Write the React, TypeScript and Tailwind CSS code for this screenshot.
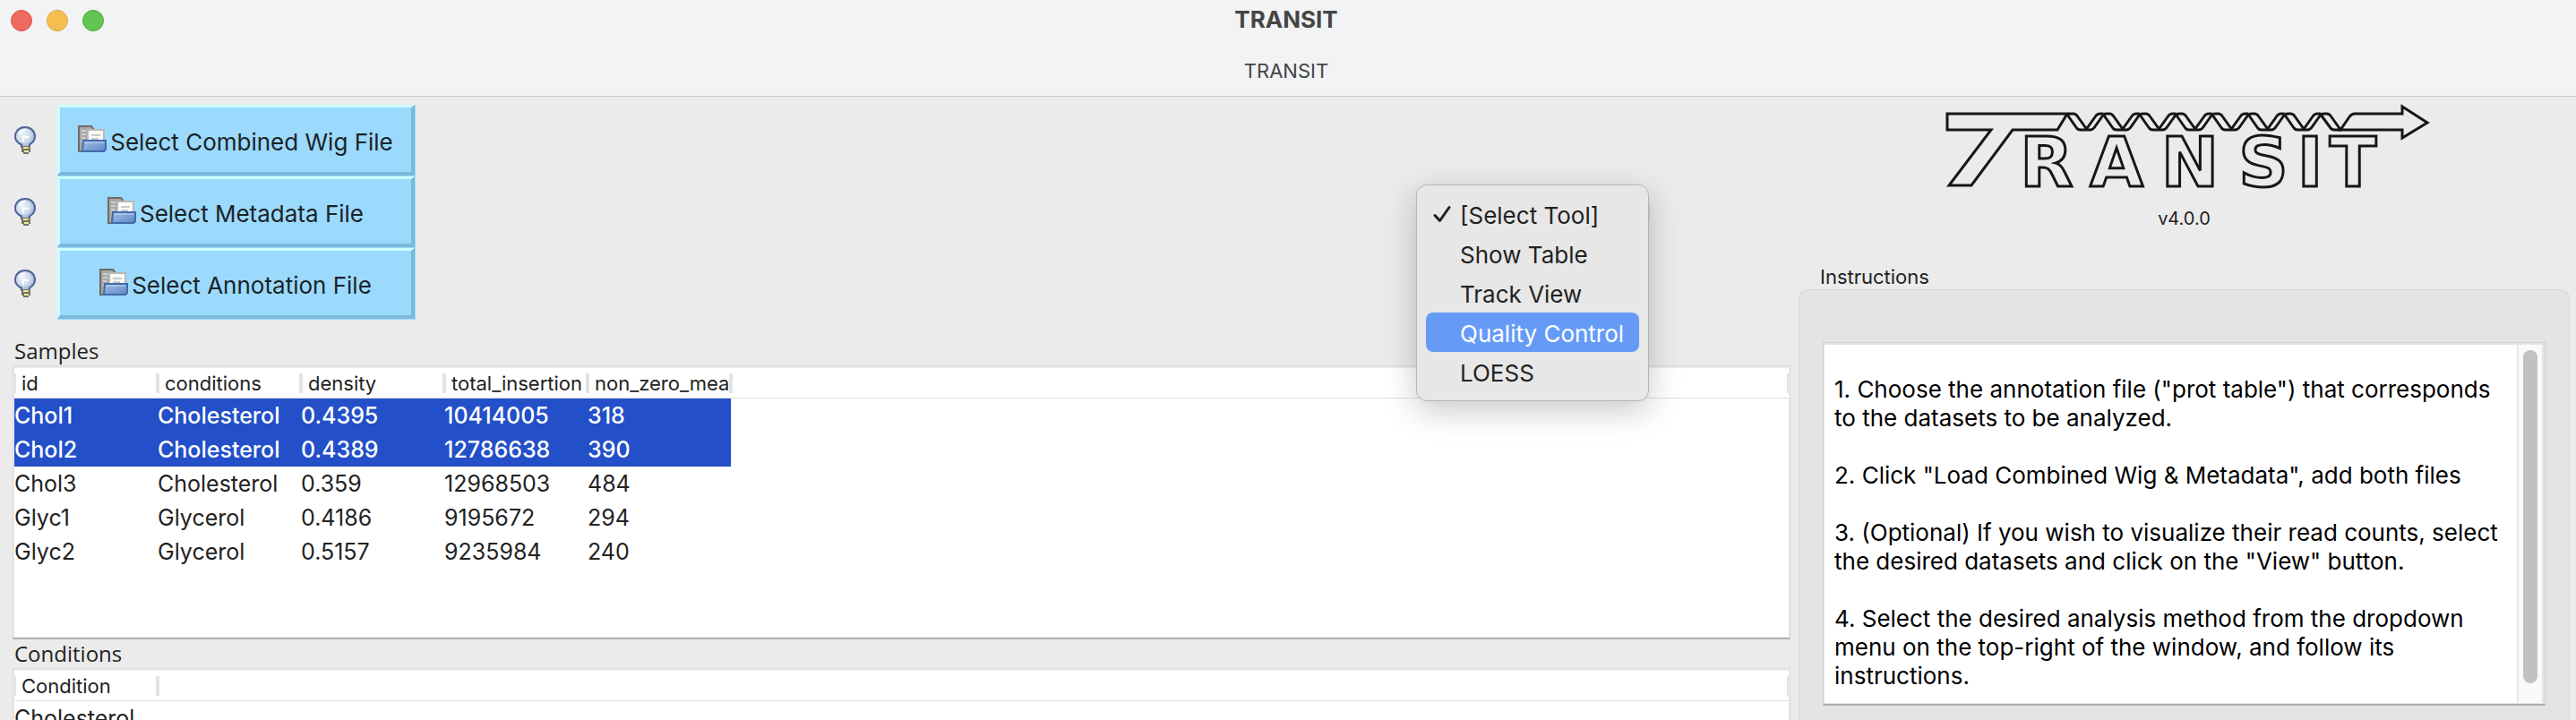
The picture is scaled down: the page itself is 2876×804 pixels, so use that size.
import React from "react";

const SAMPLE_COLUMNS = ["id", "conditions", "density", "total_insertion", "non_zero_mea"];

const SAMPLES = [
  { cells: ["Chol1", "Cholesterol", "0.4395", "10414005", "318"], selected: true },
  { cells: ["Chol2", "Cholesterol", "0.4389", "12786638", "390"], selected: true },
  { cells: ["Chol3", "Cholesterol", "0.359", "12968503", "484"], selected: false },
  { cells: ["Glyc1", "Glycerol", "0.4186", "9195672", "294"], selected: false },
  { cells: ["Glyc2", "Glycerol", "0.5157", "9235984", "240"], selected: false },
];

const CONDITIONS = [{ cells: ["Cholesterol"], selected: false }];

const FILES = ["Select Combined Wig File", "Select Metadata File", "Select Annotation File"];

const TOOLS = ["[Select Tool]", "Show Table", "Track View", "Quality Control", "LOESS"];

const STEPS = [
  '1. Choose the annotation file ("prot table") that corresponds to the datasets to be analyzed.',
  '2. Click "Load Combined Wig & Metadata", add both files',
  '3. (Optional) If you wish to visualize their read counts, select the desired datasets and click on the "View" button.',
  "4. Select the desired analysis method from the dropdown menu on the top-right of the window, and follow its instructions.",
];

function BulbIcon() {
  return (
    <svg viewBox="0 0 24 32" className="h-8 w-6" aria-hidden="true">
      <defs>
        <radialGradient id="glass" cx="0.4" cy="0.4" r="0.65">
          <stop offset="0" stopColor="#eef4fb" />
          <stop offset="0.55" stopColor="#cfdcec" />
          <stop offset="1" stopColor="#92a8cd" />
        </radialGradient>
      </defs>
      <path
        d="M8 23v-2.500C3.500 18.500 1 15.500 1 11.500 1 5.500 5.500 1 12 1s11 4.500 11 10.500c0 4-2.500 7-6 9V23z"
        fill="url(#glass)"
        stroke="#4f6298"
        strokeWidth="2"
      />
      <path d="M9 17v-6h7v2h-5v5z" fill="#fff" />
      <path d="M6 9c1-3 3-4.500 6-5" fill="none" stroke="#fff" strokeWidth="2" />
      <path d="M8 22h10v7h-2v2h-6v-2H8z" fill="#77735a" />
      <path d="M10 23h5v2h-5zM11 27h5v2h-5z" fill="#e8e6b0" />
      <path d="M15 23h2v2h-2z" fill="#aaa46d" />
    </svg>
  );
}

function FolderIcon() {
  return (
    <svg viewBox="0 0 32 32" className="h-8 w-8 shrink-0" aria-hidden="true">
      <defs>
        <linearGradient id="front" x1="0" y1="0" x2="1" y2="1">
          <stop offset="0" stopColor="#a3bfe6" />
          <stop offset="1" stopColor="#5c86c6" />
        </linearGradient>
      </defs>
      <path d="M1 1h14l3 4h11v24H1z" fill="#a8a8a6" stroke="#6e6b68" strokeWidth="2" />
      <path d="M4 6h5M4 10h5M4 14h4M4 18h3" stroke="#d0d0ce" strokeWidth="2" />
      <path d="M11 5h18v15H11z" fill="#fafafa" stroke="#b9b9b7" strokeWidth="2" />
      <path d="M15 11h10M15 15h8" stroke="#c9c9c9" strokeWidth="2" />
      <path d="M6 17h25v10l-2 2H5z" fill="url(#front)" stroke="#426bae" strokeWidth="2" />
      <path d="M8 19h21" stroke="#c4d7f1" strokeWidth="1" />
    </svg>
  );
}

const HELIX_STARTS = [140, 180.4, 220.900, 261.300, 301.800, 342.200, 382.600];

function Logo() {
  return (
    <svg viewBox="-3 -1 548 104" className="h-[104px] w-[548px]" role="img" aria-label="TRANSIT">
      <g fill="none" stroke="#161616" strokeWidth="3" strokeLinejoin="round">
        <path d="M140 14H6v18h49L8 94h25L79 32h50z" strokeLinejoin="miter" />
        {HELIX_STARTS.map((x) => (
          <g key={x} transform={`translate(${x} 0)`}>
            <path d="M0 15l10.500 15q1.500 2 4 2h11q3 0 5-3L40.400 15" />
            <path d="M0 15q1.500-1 4-1h3q2.500 0 4.500 3l10 14 10-14q2-3 5-3h3.900" />
          </g>
        ))}
        <path d="M423 15l11 15q1.500 2 4 2h8M423 15q1.500-1 4-1h3q2.500 0 4.500 3l10 14" />
        <path
          d="M445 32l10-14.500Q457.500 14 461 14h53V6l28 18-28 17v-9z"
          strokeLinejoin="miter"
        />
      </g>
      <g
        className="font-['DejaVu_Sans'] text-[77px] font-bold"
        fill="none"
        stroke="#161616"
        strokeWidth="3"
        textAnchor="middle"
      >
        <text x="117" y="95">R</text>
        <text x="195" y="95">A</text>
        <text x="277" y="95">N</text>
        <text x="359" y="95">S</text>
        <text x="411" y="95">I</text>
        <text x="459" y="95">T</text>
      </g>
    </svg>
  );
}

function HeaderCell({ children }: { children?: React.ReactNode }) {
  return (
    <th scope="col" className="h-[34px] border-b border-[#dedede] p-0 text-left align-top font-normal">
      <div className="mt-[6px] flex h-[22px] items-center border-x-2 border-[#e3e3e3] pl-[6px] text-[22px] leading-7 whitespace-nowrap">
        {children}
      </div>
    </th>
  );
}

type Row = { cells: string[]; selected: boolean };

function DataTable({ label, columns, rows }: { label: string; columns: string[]; rows: Row[] }) {
  return (
    <table aria-label={label} className="w-full table-fixed border-separate border-spacing-0">
      <colgroup>
        {columns.map((c) => (
          <col key={c} className="w-[160px]" />
        ))}
        <col />
      </colgroup>
      <thead>
        <tr>
          {columns.map((c) => (
            <HeaderCell key={c}>{c}</HeaderCell>
          ))}
          <HeaderCell />
        </tr>
      </thead>
      <tbody>
        {rows.map((r) => (
          <tr key={r.cells[0]} aria-selected={r.selected}>
            {r.cells.map((c, i) => (
              <td
                key={i}
                className={
                  r.selected
                    ? "h-[38px] bg-[#234fc8] p-0 text-[25px] leading-[38px] font-medium text-white"
                    : "h-[38px] p-0 text-[25px] leading-[38px]"
                }
              >
                {c}
              </td>
            ))}
            <td />
          </tr>
        ))}
      </tbody>
    </table>
  );
}

function ToolMenu() {
  return (
    <div className="relative h-[34px] w-[258px]">
      <button
        type="button"
        aria-label="Tool"
        aria-haspopup="menu"
        aria-expanded="true"
        className="h-full w-full rounded-[10px] border border-[#cfcfcf] bg-[#f4f4f4]"
      />
      <div
        role="menu"
        className="absolute -top-[14px] -left-[3px] z-10 w-[260px] rounded-[12px] border border-[#b4b4b4] bg-[#e7e7e7] p-[10px] shadow-[0_10px_36px_rgba(0,0,0,0.22)]"
      >
        {TOOLS.map((t, i) => (
          <button
            key={t}
            type="button"
            role="menuitemradio"
            aria-checked={i === 0}
            className={
              i === 3
                ? "flex h-11 w-full items-center rounded-[8px] bg-[#659bf7] text-[26px] text-white"
                : "flex h-11 w-full items-center rounded-[8px] text-[26px]"
            }
          >
            <span className="flex w-[38px] shrink-0 justify-center pr-[2px]">
              {i === 0 && (
                <svg viewBox="0 0 20 20" className="h-5 w-5" aria-hidden="true">
                  <path
                    d="M2 11.500L7.500 17.500 18 2.500"
                    fill="none"
                    stroke="#222"
                    strokeWidth="3"
                    strokeLinecap="round"
                    strokeLinejoin="round"
                  />
                </svg>
              )}
            </span>
            <span className="pt-[3px] whitespace-nowrap">{t}</span>
          </button>
        ))}
      </div>
    </div>
  );
}

export default function App() {
  return (
    <div className="flex h-screen flex-col overflow-hidden bg-[#ebebeb] font-[Inter,'Liberation_Sans',sans-serif] text-[#222]">
      <header className="relative border-b border-[#c6c6c6] bg-[#f1f3f5] pr-1 text-center text-[#454545]">
        <div className="absolute top-[11px] left-3 flex gap-4">
          <button type="button" aria-label="Close" className="size-6 rounded-full border border-[#d9534a] bg-[#ed6b5f]" />
          <button type="button" aria-label="Minimize" className="size-6 rounded-full border border-[#dba641] bg-[#f5bf4f]" />
          <button type="button" aria-label="Zoom" className="size-6 rounded-full border border-[#51a73d] bg-[#61c554]" />
        </div>
        <h1 className="pt-[6px] text-[26px] leading-8 font-bold">TRANSIT</h1>
        <p className="pt-[25px] pb-3 text-[22px] leading-8">TRANSIT</p>
      </header>

      <div className="flex min-h-0 flex-1">
        <main className="flex min-w-0 flex-1 flex-col">
          <div className="flex items-center justify-between pt-[9px] pr-[158px]">
            <div>
              {FILES.map((f) => (
                <div key={f} className="flex h-20 items-center gap-6 pl-4">
                  <BulbIcon />
                  <button
                    type="button"
                    className="h-full w-[400px] border-r border-b border-[#9bdafc] bg-[#9bdafc] text-[26px] text-[#1b2328]"
                  >
                    <span className="flex h-full items-center justify-center gap-1 border-t-[3px] border-r-4 border-b-4 border-l-[3px] border-t-[#cdfdff] border-r-[#7ab8dc] border-b-[#7ab8dc] border-l-[#cdfdff]">
                      <FolderIcon />
                      <span className="pt-1">{f}</span>
                    </span>
                  </button>
                </div>
              ))}
            </div>
            <ToolMenu />
          </div>

          <h2 className="mt-[19px] pl-4 font-['Open_Sans'] text-[24px] leading-8 font-medium">Samples</h2>
          <div className="mr-px ml-[14px] h-[306px] shrink-0 border border-b-2 border-[#d9d9d9] border-b-[#b2b2b2] p-px pt-[2px]">
            <div className="h-full bg-white">
              <DataTable label="Samples" columns={SAMPLE_COLUMNS} rows={SAMPLES} />
            </div>
          </div>

          <h2 className="pl-4 font-['Open_Sans'] text-[24px] leading-8 font-medium">Conditions</h2>
          <div className="mr-px ml-[14px] min-h-0 flex-1 overflow-hidden border border-b-0 border-[#d9d9d9] p-px pt-[2px] pb-0">
            <div className="h-full bg-white">
              <DataTable label="Conditions" columns={["Condition"]} rows={CONDITIONS} />
            </div>
          </div>
        </main>

        <aside className="flex w-[876px] shrink-0 flex-col pr-[7px] pl-2">
          <div className="flex flex-col items-center pt-1">
            <Logo />
            <p className="mt-3 text-[20px] leading-8">v4.0.0</p>
          </div>
          <h2 className="mt-[35px] pl-6 text-[22px] leading-7">Instructions</h2>
          <section
            aria-label="Instructions"
            className="min-h-0 flex-1 rounded-t-[10px] border border-b-0 border-[#d8d8d8] bg-[#e4e4e4] px-[26px] pt-[58px]"
          >
            <div className="flex h-[406px] border border-b-2 border-[#d0d0d0] border-b-[#b0b0b0] p-px pt-[2px] pr-[3px]">
              <div className="flex-1 bg-white pt-[34px] pr-4 pl-[11px] text-[26px] leading-8 text-black">
                {STEPS.map((s) => (
                  <p key={s} className="mb-8">
                    {s}
                  </p>
                ))}
              </div>
              <div className="flex w-7 justify-center border-l-2 border-[#e8e8e8] bg-[#fafafa] pt-[6px]">
                <div className="h-[372px] w-4 rounded-full bg-[#c1c1c1]" />
              </div>
            </div>
          </section>
        </aside>
      </div>
    </div>
  );
}
